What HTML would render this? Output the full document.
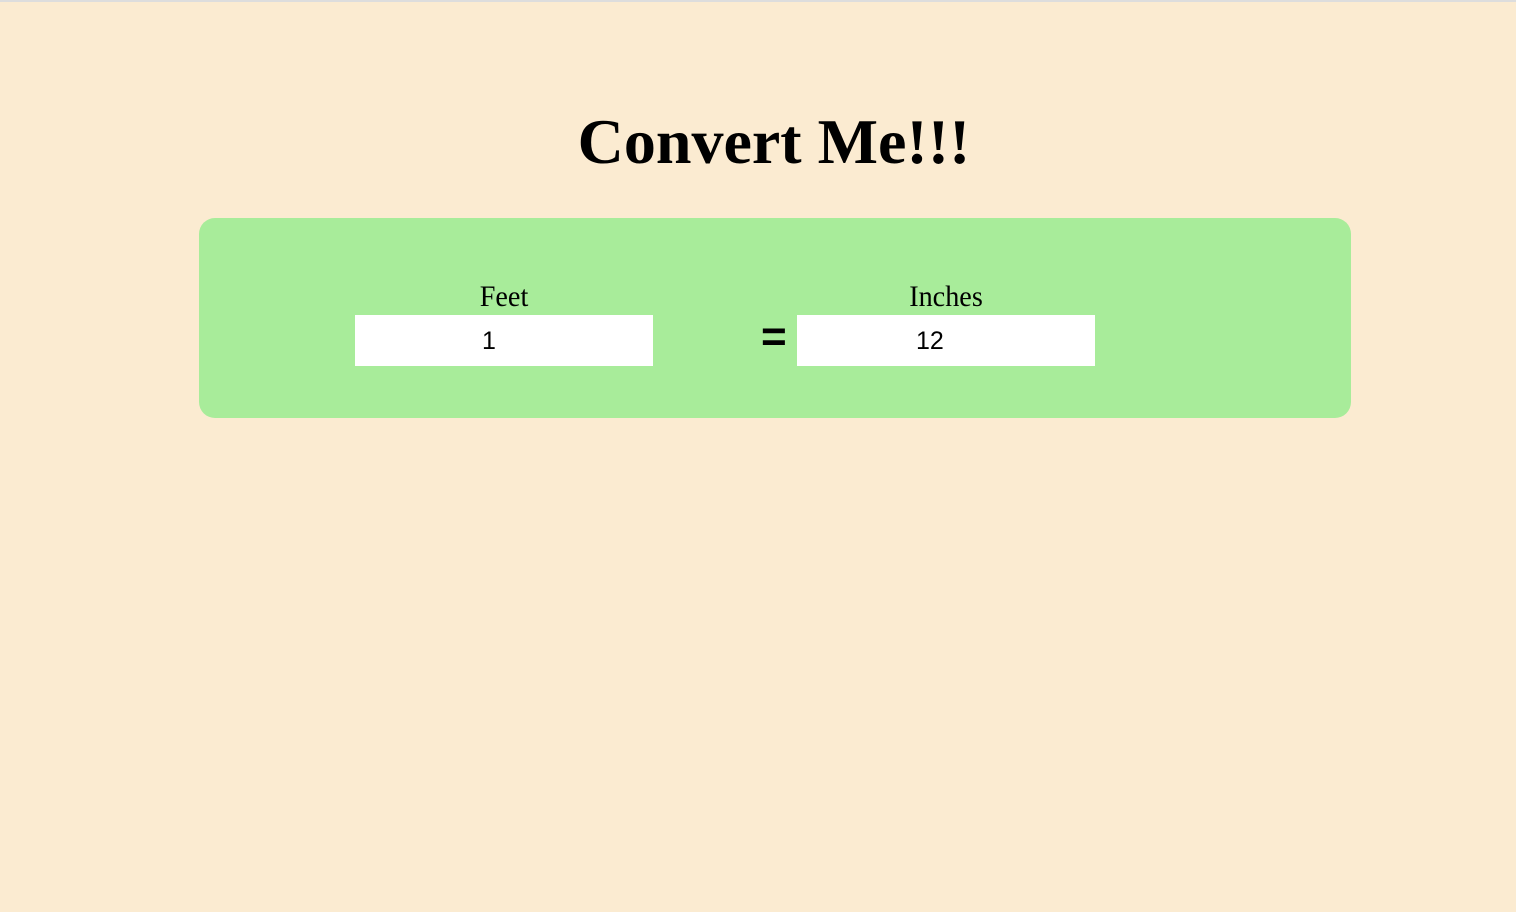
<!DOCTYPE html>
<html><head><style>
html,body{margin:0;padding:0}
body{width:1516px;height:912px;background:#fbebd1;border-top:2px solid #ddd;box-sizing:border-box;font-family:"Liberation Serif",serif;position:relative;overflow:hidden}
h1{position:absolute;top:100px;left:0;width:1548px;text-align:center;margin:0;font-size:64px;font-weight:bold;line-height:80px}
.box{position:absolute;left:199px;top:216px;width:1152px;height:200px;background:#a8ec9a;border-radius:16px}
.lab{position:absolute;top:277px;font-size:30px;text-align:center;width:298px;line-height:36px;transform:scaleX(0.94)}
.inp{position:absolute;top:313px;width:298px;height:51px;background:#fff;font-family:"Liberation Sans",sans-serif;font-size:25px;line-height:52px}
.eq{position:absolute;left:761px;top:310px;font-family:"Liberation Sans",sans-serif;font-weight:bold;font-size:44px;line-height:50px}
</style></head><body>
<h1>Convert Me!!!</h1>
<div class="box"></div>
<div class="lab" style="left:355px">Feet</div>
<div class="lab" style="left:797px">Inches</div>
<div class="inp" style="left:355px;padding-left:127px;box-sizing:border-box">1</div>
<div class="eq">=</div>
<div class="inp" style="left:797px;padding-left:119px;box-sizing:border-box">12</div>
</body></html>
